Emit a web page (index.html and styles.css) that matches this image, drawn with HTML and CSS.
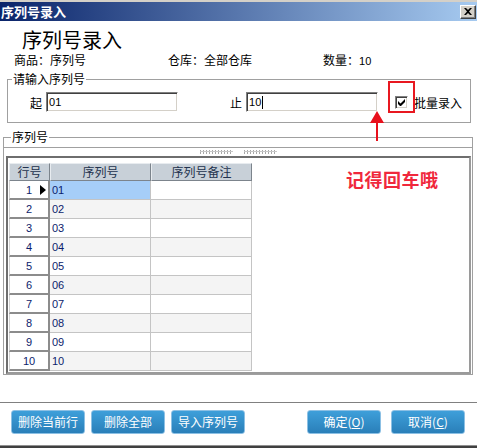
FILE: index.html
```html
<!DOCTYPE html>
<html lang="zh-CN">
<head>
<meta charset="utf-8">
<title>序列号录入</title>
<link rel="stylesheet" href="styles.css">
</head>
<body>
<div class="win">
  <div class="topline"></div>
  <div class="titlebar">
    <span class="title">序列号录入</span>
    <span class="close"><svg width="8" height="7" viewBox="0 0 8 7"><path d="M0 0h2l2 2 2-2h2L5 3.5 8 7H6L4 5 2 7H0l3-3.5z" fill="#000"/></svg></span>
  </div>
  <h1 class="heading">序列号录入</h1>
  <div class="info">
    <span class="info-item w1">商品：序列号</span>
    <span class="info-item w2">仓库：全部仓库</span>
    <span class="info-item">数量：<span class="num">10</span></span>
  </div>
  <fieldset class="fs fs-input">
    <legend>请输入序列号</legend>
    <div class="input-row">
      <span class="lbl">起</span>
      <div class="tbox">01</div>
      <span class="lbl lbl-end">止</span>
      <div class="tbox">10<span class="caret"></span></div>
      <span class="chk"><svg width="7" height="7" viewBox="0 0 7 7"><path d="M0 2v3l2 2h1l4-4V0L2.5 4.5z" fill="#000"/></svg></span>
      <span class="chk-label">批量录入</span>
    </div>
  </fieldset>
  <fieldset class="fs fs-grid">
    <legend>序列号</legend>
    <div class="splitter"><span class="grip"></span><span class="grip"></span></div>
    <div class="gridpanel">
      <table class="grid">
        <colgroup><col class="c-rh"><col class="c-sn"><col class="c-note"></colgroup>
        <thead>
          <tr><th>行号</th><th>序列号</th><th>序列号备注</th></tr>
        </thead>
        <tbody>
          <tr><td class="rh">1<span class="ind"></span></td><td class="sel">01</td><td></td></tr>
          <tr class="alt"><td class="rh">2</td><td>02</td><td></td></tr>
          <tr><td class="rh">3</td><td>03</td><td></td></tr>
          <tr class="alt"><td class="rh">4</td><td>04</td><td></td></tr>
          <tr><td class="rh">5</td><td>05</td><td></td></tr>
          <tr class="alt"><td class="rh">6</td><td>06</td><td></td></tr>
          <tr><td class="rh">7</td><td>07</td><td></td></tr>
          <tr class="alt"><td class="rh">8</td><td>08</td><td></td></tr>
          <tr><td class="rh">9</td><td>09</td><td></td></tr>
          <tr class="alt"><td class="rh">10</td><td>10</td><td></td></tr>
        </tbody>
      </table>
      <div class="hint">记得回车哦</div>
    </div>
  </fieldset>
  <div class="sep"></div>
  <div class="buttons">
    <button class="btn">删除当前行</button>
    <button class="btn">删除全部</button>
    <button class="btn">导入序列号</button>
    <button class="btn btn-ok">确定(<u>O</u>)</button>
    <button class="btn btn-cancel">取消(<u>C</u>)</button>
  </div>
  <div class="bottomline"></div>

  <div class="redbox"></div>
  <svg class="arrow" width="16" height="31" viewBox="0 0 16 31"><path d="M8 0L1 12h6v18h2V12h6z" fill="#E8101C"/></svg>
</div>
</body>
</html>
```
FILE: styles.css
```css
* { box-sizing: border-box; }
html, body { margin: 0; padding: 0; }
body {
  width: 477px;
  height: 448px;
  overflow: hidden;
  background: #fff;
  font-family: "Noto Sans CJK SC", sans-serif;
  font-size: 12px;
  color: #000;
}
.win {
  position: relative;
  width: 477px;
  height: 448px;
  display: flex;
  flex-direction: column;
}
.topline { height: 2px; background: #D4D0C8; flex: none; }
.titlebar {
  flex: none;
  height: 19px;
  background: linear-gradient(to right, #0A246A, #A6CAF0);
  display: flex;
  align-items: center;
  justify-content: space-between;
  padding: 0 1px 0 1px;
}
.title { color: #fff; font-weight: bold; font-size: 13px; line-height: 19px; }
.close {
  width: 16px;
  height: 14px;
  background: #D4D0C8;
  border: 1px solid;
  border-color: #fff #404040 #404040 #fff;
  box-shadow: inset -1px -1px 0 #808080;
  display: flex;
  align-items: center;
  justify-content: center;
}
.heading {
  margin: 8px 0 0 22px;
  font-size: 20px;
  line-height: 22px;
  font-weight: normal;
}
.info { display: flex; margin: 2px 0 0 14px; line-height: 14px; }
.w1 { width: 154px; }
.w2 { width: 155px; }
.num { font-family: "Liberation Sans", sans-serif; font-size: 11px; }

.fs {
  margin: 0;
  padding: 0;
  border: 1px solid #A0A0A0;
  min-width: 0;
}
.fs legend { padding: 0 1px; line-height: 16px; font-size: 12px; }
.fs-input { margin: 3px 0 0 7px; width: 464px; }
.fs-input legend { margin-left: 4px; }
.input-row {
  display: flex;
  align-items: center;
  height: 20px;
  margin: 5px 0 10px 22px;
}
.lbl { margin-right: 4px; }
.lbl-end { margin-left: 52px; }
.tbox {
  width: 132px;
  height: 20px;
  border: 1px solid;
  border-color: #808080 #fff #fff #808080;
  box-shadow: inset 1px 1px 0 #404040, inset -1px -1px 0 #D4D0C8;
  padding-left: 2px;
  font-family: "Liberation Sans", sans-serif;
  font-size: 11px;
  line-height: 18px;
  display: flex;
  align-items: center;
}
.caret { display: inline-block; width: 1px; height: 13px; background: #000; margin-left: 1px; }
.chk {
  width: 13px;
  height: 13px;
  margin-left: 17px;
  border: 1px solid;
  border-color: #808080 #fff #fff #808080;
  box-shadow: inset 1px 1px 0 #404040, inset -1px -1px 0 #D4D0C8;
  background: #fff;
  display: flex;
  align-items: center;
  justify-content: center;
}
.chk-label { margin-left: 6px; }

.fs-grid { margin: 6px 0 0 3px; width: 470px; }
.fs-grid legend { margin-left: 7px; }
.splitter {
  margin-top: 2px;
  height: 9px;
  border-top: 1px solid #A0A0A0;
  display: flex;
  gap: 11px;
  padding: 2px 0 0 196px;
}
.grip {
  width: 33px;
  height: 4px;
  background-image:
    linear-gradient(transparent 0 1px, #C8C8C8 1px 2px, transparent 2px),
    repeating-linear-gradient(90deg, #A8A8A8 0 1px, transparent 1px 3px);
}
.gridpanel {
  position: relative;
  margin: 0 1px 0 2px;
  border: 2px solid;
  border-color: #6E6E6E #9A9A9A #9A9A9A #6E6E6E;
  padding: 5px 0 1px 1px;
  background: #fff;
}
.grid {
  border-collapse: separate;
  border-spacing: 0;
  table-layout: fixed;
  width: 243px;
}
.c-rh { width: 41px; }
.c-sn { width: 101px; }
.c-note { width: 101px; }
.grid thead tr { height: 18px; }
.grid th {
  padding: 0;
  background: #C8D0D8;
  color: #22324E;
  font-weight: normal;
  font-size: 12px;
  line-height: 14px;
  border-top: 1px solid #E8ECF0;
  border-left: 1px solid #E8ECF0;
  border-right: 1px solid #7C848C;
  border-bottom: 1px solid #7C848C;
}
.grid tbody tr { height: 19px; }
.grid td {
  padding: 0 0 0 2px;
  border-right: 1px solid #C4C4C4;
  border-bottom: 1px solid #C4C4C4;
  font-family: "Liberation Sans", sans-serif;
  font-size: 11px;
  color: #0C1C6C;
  line-height: 16px;
}
.grid tr.alt td { background: #F4F4F4; }
.grid td.rh, .grid tr.alt td.rh {
  position: relative;
  padding: 0;
  text-align: center;
  background: #fff;
  border-left: 1px solid #D0D0D0;
  border-right: 2px solid #8C8C8C;
  border-bottom: 2px solid #8C8C8C;
}
.grid td.sel { background: #A6CEF8; }
.ind {
  position: absolute;
  right: 2px;
  top: 4px;
  width: 0;
  height: 0;
  border-top: 5px solid transparent;
  border-bottom: 5px solid transparent;
  border-left: 6px solid #000;
}
.hint {
  position: absolute;
  left: 338px;
  top: 10px;
  color: #F0283C;
  font-size: 18px;
  font-weight: bold;
  line-height: 22px;
  letter-spacing: 0.5px;
}

.sep { flex: none; margin-top: 27px; height: 1px; background: #808080; }
.buttons {
  display: flex;
  margin-top: 7px;
  padding: 0 12px 0 11px;
  gap: 6px;
}
.btn {
  width: 74px;
  height: 24px;
  padding: 0;
  border: 1px solid #8CC0E4;
  border-radius: 3px;
  background: linear-gradient(#3E9FDA, #2A7FB9);
  color: #fff;
  font-family: "Noto Sans CJK SC", sans-serif;
  font-size: 12px;
  line-height: 20px;
}
.btn u { text-decoration-thickness: 1px; }
.btn-ok { margin-left: auto; }
.btn-cancel { margin-left: 4px; }
.bottomline {
  margin-top: auto;
  height: 3px;
  border-top: 1px solid #909090;
  background: #404040;
  flex: none;
}
.redbox {
  position: absolute;
  left: 388px;
  top: 81px;
  width: 27px;
  height: 32px;
  border: 2px solid #E81820;
}
.arrow { position: absolute; left: 369px; top: 111px; }
```
